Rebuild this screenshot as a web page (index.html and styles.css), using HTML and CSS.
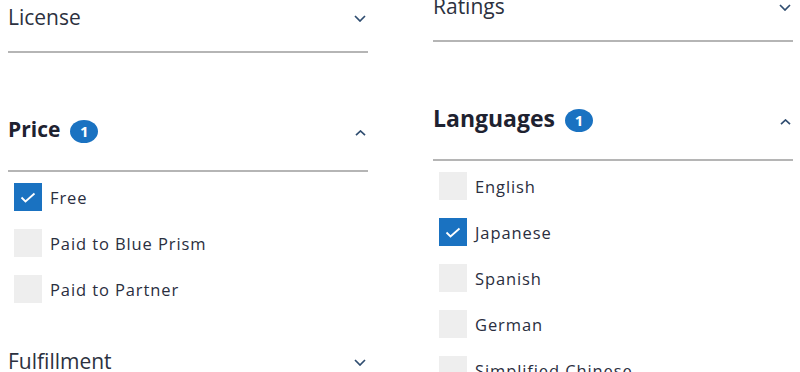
FILE: index.html
```html
<!DOCTYPE html>
<html>
	<head>
		<meta charset="UTF-8">
		<title>Filters</title>
		<link rel="stylesheet" href="styles.css">
	</head>
	<body>
		<div class="filters">
			<div class="col">
				<section class="filter">
					<div class="filter-head">
						<span class="filter-title">License</span>
						<svg class="chev" width="12" height="7" viewBox="0 0 12 7"><path d="M1 1 L6 6 L11 1" /></svg>
					</div>
				</section>
				<section class="filter open">
					<div class="filter-head">
						<h3>Price <span class="badge">1</span></h3>
						<svg class="caret" width="11" height="6" viewBox="0 0 11 6"><path d="M1 5.2 L5.5 1 L10 5.2" /></svg>
					</div>
					<ul class="options">
						<li><span class="box checked"><svg width="28" height="28" viewBox="0 0 28 28"><path d="M7.5 14.5 L11.5 18.5 L20.5 10.5" /></svg></span>Free</li>
						<li><span class="box"></span>Paid to Blue Prism</li>
						<li><span class="box"></span>Paid to Partner</li>
					</ul>
				</section>
				<section class="filter">
					<div class="filter-head">
						<span class="filter-title">Fulfillment</span>
						<svg class="chev" width="12" height="7" viewBox="0 0 12 7"><path d="M1 1 L6 6 L11 1" /></svg>
					</div>
				</section>
			</div>

			<div class="col col-right">
				<section class="filter">
					<div class="filter-head">
						<span class="filter-title">Ratings</span>
						<svg class="chev" width="12" height="7" viewBox="0 0 12 7"><path d="M1 1 L6 6 L11 1" /></svg>
					</div>
				</section>
				<section class="filter open">
					<div class="filter-head">
						<h3 class="big">Languages <span class="badge">1</span></h3>
						<svg class="caret" width="11" height="6" viewBox="0 0 11 6"><path d="M1 5.2 L5.5 1 L10 5.2" /></svg>
					</div>
					<ul class="options">
						<li><span class="box"></span>English</li>
						<li><span class="box checked"><svg width="28" height="28" viewBox="0 0 28 28"><path d="M7.5 14.5 L11.5 18.5 L20.5 10.5" /></svg></span>Japanese</li>
						<li><span class="box"></span>Spanish</li>
						<li><span class="box"></span>German</li>
						<li><span class="box"></span>Simplified Chinese</li>
					</ul>
				</section>
			</div>
		</div>
	</body>
</html>
```

FILE: styles.css
```css
body, html {
	margin: 0;
	padding: 0;
	height: 100%;
	overflow: hidden;
	background: #FFF;
	font-family: "Open Sans", "Noto Sans", sans-serif;
	color: #2c3140;
}

.filters {
	display: flex;
	gap: 65px;
	padding: 3px 0 0 8px;
}
.col {
	width: 360px;
	flex: none;
}
.col-right { margin-top: -11px; }

.filter { margin-top: 62px; }
.filter:first-child { margin-top: 0; }
.filter.open + .filter { margin-top: 44px; }

.filter-head {
	display: flex;
	align-items: center;
	justify-content: space-between;
	height: 28px;
	padding-bottom: 20px;
	border-bottom: 2px solid #b5b5b5;
}
.filter.open .filter-head { padding-bottom: 27px; }

.filter-title {
	font-size: 21px;
	line-height: 28px;
}
.filter-head h3 {
	display: flex;
	align-items: center;
	gap: 10px;
	height: 28px;
	margin: 0;
	font-size: 21px;
	line-height: 28px;
	font-weight: 700;
	color: #1e2230;
}
.filter-head h3.big { font-size: 23px; }

.badge {
	display: inline-flex;
	align-items: center;
	justify-content: center;
	width: 28px;
	height: 23px;
	margin-top: 5px;
	border-radius: 50%;
	background: #1a72c1;
	color: #FFF;
	font-size: 15px;
	line-height: 1;
	font-weight: 700;
}

.chev, .caret {
	fill: none;
	stroke: #2f4d70;
	stroke-width: 1.7;
	margin-right: 2px;
}
.chev { margin-top: 3px; }
.caret { margin-top: 8px; }

.options {
	list-style: none;
	margin: 11px 0 0;
	padding: 0;
	display: flex;
	flex-direction: column;
	gap: 18px;
}
.options li {
	display: flex;
	align-items: center;
	height: 28px;
	font-size: 16.5px;
	letter-spacing: 0.9px;
	color: #2a2e40;
	white-space: nowrap;
}
.box {
	width: 28px;
	height: 28px;
	margin: 0 8px 0 6px;
	background: #eeeeee;
	flex: none;
}
.box.checked { background: #1a72c1; }
.box svg {
	display: block;
	fill: none;
	stroke: #FFF;
	stroke-width: 1.8;
}
```
